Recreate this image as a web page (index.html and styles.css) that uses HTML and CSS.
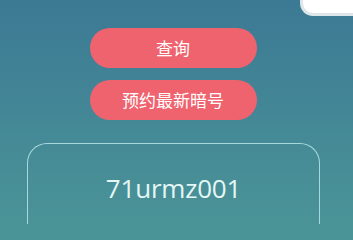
FILE: index.html
```html
<!DOCTYPE html>
<html lang="zh">
<head>
<meta charset="utf-8">
<link rel="stylesheet" href="styles.css">
</head>
<body>
<div class="page">
  <div class="topbar"><div class="corner-card"></div></div>
  <div class="actions">
    <button class="btn">查询</button>
    <button class="btn">预约最新暗号</button>
  </div>
  <div class="code-box"><span class="code">71urmz001</span></div>
</div>
</body>
</html>
```
FILE: styles.css
```css
html {
  margin: 0;
  padding: 0;
  height: 100%;
  overflow: hidden;
  background: #4a9397 linear-gradient(180deg, #3c7994 0px, #438796 112px, #4a9397 224px) no-repeat;
  background-size: 100% 224px;
}
body {
  margin: 0;
  padding: 0;
  width: 353px;
  height: 100%;
  overflow: hidden;
  font-family: "Noto Sans CJK SC", "Noto Sans", sans-serif;
}
.page {
  display: flex;
  flex-direction: column;
}
.topbar {
  display: flex;
  justify-content: flex-end;
  height: 16px;
  flex: none;
}
.corner-card {
  width: 50px;
  height: 13px;
  background: #ffffff;
  border: 3px solid #dfe6ea;
  border-top: none;
  border-right: none;
  border-bottom-left-radius: 13px;
}
.actions {
  display: flex;
  flex-direction: column;
  align-items: center;
  gap: 12px;
  margin-top: 12px;
  padding-right: 7px;
  flex: none;
}
.btn {
  width: 167px;
  height: 40px;
  border: none;
  border-radius: 20px;
  background: #ef636f;
  color: #ffffff;
  font-family: "Noto Sans CJK SC", "Noto Sans", sans-serif;
  font-size: 17px;
  line-height: 40px;
  padding: 0;
}
.code-box {
  margin: 23px 33px 0 27px;
  height: 81px;
  flex: none;
  border: 1px solid #a6d8dc;
  border-bottom: none;
  border-radius: 20px 20px 0 0;
  display: flex;
  justify-content: center;
  padding-top: 25px;
  box-sizing: border-box;
}
.code {
  font-family: "Open Sans", sans-serif;
  font-size: 26px;
  line-height: 38px;
  color: #e4f7f6;
  letter-spacing: -0.2px;
}
```
